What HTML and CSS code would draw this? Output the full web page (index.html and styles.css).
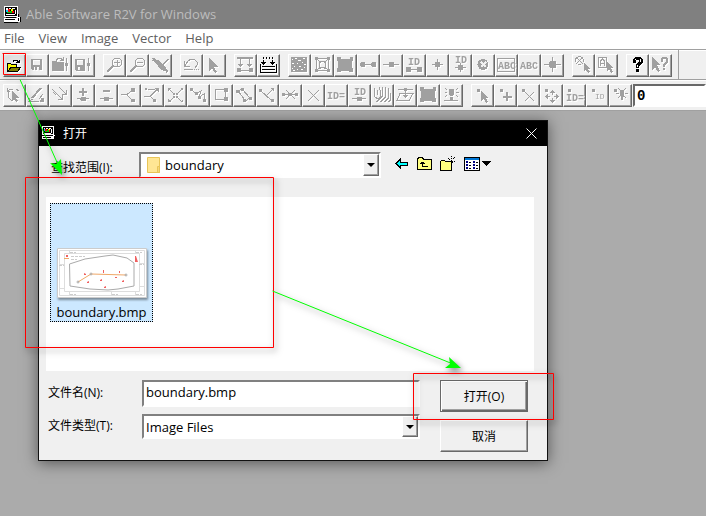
FILE: index.html
```
<!DOCTYPE html>
<html lang="zh-CN">
<head>
<meta charset="utf-8">
<title>Able Software R2V for Windows</title>
<link rel="stylesheet" href="styles.css">
</head>
<body>
<svg class="defs" aria-hidden="true">
  <symbol id="app" viewBox="0 0 18 18">
    <path fill="#fff" d="M0 0h14v11H0zM0 12h13v4H0z"/>
    <path fill="#000" d="M1 1h12v9H1zM2 11h10v1H2zM1 13h10v1H1zM0 16h14v1H0zM14 8h1v3h-1z"/>
    <path fill="#fff" d="M2 2h2v2H2zM5 2h2v1H5zM8 2h3v1H8zM11 4h1v4h-1zM2 8h9v1H2zM13 11h3v5h-3z"/>
    <path fill="#000" d="M14 12h1v3h-1zM16 11h1v5h-1z"/>
    <path fill="#ff0" d="M7 3h2v2H7z"/><path fill="#0cf" d="M2 4h2v2H2z"/><path fill="red" d="M4 3h2v3H4zM8 5h2v2H8z"/><path fill="#0c0" d="M3 6h3v1H3zM6 5h2v2H6z"/>
  </symbol>
</svg>
<div class="app">
  <header class="titlebar"><svg class="app-icon"><use href="#app"/></svg><h1>Able Software R2V for Windows</h1></header>
  <nav class="menu"><a href="#file">File</a><a href="#view">View</a><a href="#image">Image</a><a href="#vector">Vector</a><a href="#help">Help</a></nav>

  <div class="toolbar main-tools">
    <div class="group">
      <button class="tool live" aria-label="Open"><svg viewBox="0 0 21 21"><path fill="#ff0" d="M3 8h4v1h6v3h4l-3 5H3z"/><path fill="#808000" d="M7 12h10l-3 5H4z"/><path class="l" d="M3.500 17V8.500h3l1 1h5V12M7 12.500h9.500l-3 4H3.500l3.500-4M9 6.500l1-1h3l2 2M12 7.500h3.500V5"/></svg></button>
      <button class="tool" aria-label="Save"><svg viewBox="0 0 21 21"><path fill-rule="evenodd" d="M4 4h11v11H5l-1-1zM6 5v5h7V5zM7 12v3h1v-3zM10 12v3h2v-3z"/></svg></button>
      <button class="tool" aria-label="Open project"><svg viewBox="0 0 21 21"><path d="M2 6h4l1 1h7v9H2zM15 8h3v3h-3z"/><path class="l" d="M6 5.500l2-2h3l2 2M10 5.500h3.500V2M16.500 3v13"/></svg></button>
      <button class="tool" aria-label="Save project"><svg viewBox="0 0 21 21"><path fill-rule="evenodd" d="M2 4h10v12H3l-1-1zM4 5v5h6V5zM5 12v3h2v-3zM14 8h3v3h-3z"/><path class="l" d="M15.500 3v13"/></svg></button>
    </div>
    <div class="group">
      <button class="tool" aria-label="Zoom in"><svg viewBox="0 0 21 21"><circle class="l" cx="13" cy="7.500" r="4.500"/><path class="l" d="M10 7.500h6M13.500 5v6"/><path class="w" d="M9 11l-6 6"/></svg></button>
      <button class="tool" aria-label="Zoom out"><svg viewBox="0 0 21 21"><circle class="l" cx="13" cy="7.500" r="4.500"/><path class="l" d="M10 7.500h6"/><path class="w" d="M9 11l-6 6"/></svg></button>
      <button class="tool" aria-label="Pan view"><svg viewBox="0 0 21 21"><path d="M2 3h2l2 2h2l4 4 5-5h2l-5 6 2 3 2 3-1 2h-1v-2h-2l-3-1-3-4-4-4-1-1H2V5h1z"/></svg></button>
    </div>
    <div class="group">
      <button class="tool" aria-label="Undo"><svg viewBox="0 0 21 21"><path class="l" d="M3.500 6v5.500H9M4 11l3-5 3-2h3l3 3v3l-2 3M3 14.500h9M13 14.500h1M15 14.500h1M17 14.500h1"/></svg></button>
      <button class="tool" aria-label="Select"><svg viewBox="0 0 21 21"><path d="M5 3l9 9h-4l3 5-2 1-3-5-3 3z"/></svg></button>
    </div>
    <div class="group">
      <button class="tool" aria-label="Trace"><svg viewBox="0 0 21 21"><path d="M2 2h16v2H2zM2 13h4v4H2zM14 13h4v4h-4zM3 9h5l-2.500 3zM12 9h5l-2.500 3z"/><path class="l" d="M5.500 4v7M14.500 4v7M5 15.500h10"/></svg></button>
      <button class="tool live" aria-label="Vectorize"><svg viewBox="0 0 21 21"><path fill="#000" d="M3 7h5l-2.500 3zM12 7h5l-2.500 3z"/><path class="l" stroke-dasharray="2 1" d="M5.500 2v6M14.500 2v6M8.500 2v3M11.500 2v3"/><path class="l" d="M2.500 9v8.500h16V9M4 11.500h13M4 14.500h13"/></svg></button>
    </div>
    <div class="group">
      <button class="tool" aria-label="Raster"><svg viewBox="0 0 21 21"><path fill-rule="evenodd" d="M2 2h16v15H2zM3 4v1h1V4zM6 3v1h2V3zM9 5v1h3V5zM14 3v1h2V3zM13 7v1h1V7zM15 9v1h2V9zM8 8v1h1V8zM3 8v1h2V8zM5 11v1h1v-1zM10 11v1h2v-1zM15 12v1h1v-1zM12 14v1h2v-1zM8 14v1h1v-1zM3 13v1h1v-1zM4 15v1h2v-1z"/></svg></button>
      <button class="tool" aria-label="Outline"><svg viewBox="0 0 21 21"><path d="M3 2h3v3H3zM15 2h3v3h-3zM3 14h3v3H3zM15 14h3v3h-3zM7 6h2v2H7zM12 6h2v2h-2zM7 12h2v2H7zM12 12h2v2h-2z"/><path class="l" d="M4.500 3.500h12v12h-12zM7.500 6.500h6v6h-6zM5 4l3 3M16 4l-3 3M5 15l3-3M16 15l-3-3"/></svg></button>
      <button class="tool" aria-label="Polygon"><svg viewBox="0 0 21 21"><path d="M2 2h4v2h9V2h3v4h-1v7h1v4h-4v-1H6v1H2v-4h1V6H2z"/></svg></button>
      <button class="tool" aria-label="Line"><svg viewBox="0 0 21 21"><path d="M3 7h3l1 1v3l-1 1H3l-1-1V8zM14 7h3l1 1v3l-1 1h-3l-1-1V8z"/><path class="l" d="M6 9.500h8"/></svg></button>
      <button class="tool" aria-label="Node"><svg viewBox="0 0 21 21"><path d="M8 7h5v5H8z"/><path class="l" d="M2 9.500h16"/></svg></button>
      <button class="tool" aria-label="Line ID"><svg viewBox="0 0 21 21"><path d="M2 12h5v5H2zM13 12h5v5h-5z"/><path class="l" d="M5 14.500h10"/><text x="4" y="10">ID</text></svg></button>
      <button class="tool" aria-label="Point"><svg viewBox="0 0 21 21"><path d="M8 7h5v5H8z"/><path class="l" d="M5 9.500h11M10.500 4v11"/></svg></button>
      <button class="tool" aria-label="Point ID"><svg viewBox="0 0 21 21"><path d="M8 10h5v5H8z"/><path class="l" d="M5 12.500h11M10.500 8v9"/><text x="5" y="8">ID</text></svg></button>
      <button class="tool" aria-label="Control point"><svg viewBox="0 0 21 21"><circle cx="10" cy="9.500" r="5.500"/><path stroke="#f0f0f0" stroke-width="2" d="M8 7l5 5M13 7l-5 5"/></svg></button>
      <button class="tool" aria-label="Boxed text"><svg viewBox="0 0 21 21"><path class="l" d="M1.500 3.500h17v13h-17z"/><text class="abc" x="2" y="14">ABC</text></svg></button>
      <button class="tool" aria-label="Text"><svg viewBox="0 0 21 21"><text class="abc big" x="1" y="14">ABC</text></svg></button>
      <button class="tool" aria-label="Marker"><svg viewBox="0 0 21 21"><path d="M8 6h5l1 1v5l-1 1H8l-1-1V7z"/><path class="l" d="M2 9.500h17M10.500 2v15"/></svg></button>
    </div>
    <div class="group">
      <button class="tool" aria-label="Select point"><svg viewBox="0 0 21 21"><circle class="l" cx="6.500" cy="5.500" r="4"/><path class="l" d="M4 3l5 5M9 3L4 8"/><path d="M11 8l6 6h-2l2 3-2 1-2-3-2 1z"/></svg></button>
      <button class="tool" aria-label="Select text"><svg viewBox="0 0 21 21"><path class="l" d="M2.500 2.500h8v10h-8zM4.500 11V6l2-2 2 2v5M4 8.500h4"/><path d="M11 7l6 6h-2l2 4-2 1-2-4-2 2z"/></svg></button>
    </div>
    <div class="group">
      <button class="tool live" aria-label="Help"><svg viewBox="0 0 21 21"><path fill="#000" d="M8 2h5l3 2v4l-4 3v2H9v-4l3-2V5H9v3H6V4zM9 14h3v3H9z"/><path fill="#fff" d="M8 4h1v1H8zM13 4h1v3h-1zM10 10h1v2h-1z"/></svg></button>
      <button class="tool" aria-label="Context help"><svg viewBox="0 0 21 21"><path d="M2 2l8 8H7l3 6-2 1-3-5-3 3zM12 2h4l2 2v4l-3 2v2h-2V9l3-2V4h-3v3h-2V4zM13 13h2v2h-2z"/></svg></button>
    </div>
  </div>

  <div class="toolbar edit-tools">
    <div class="group">
      <button class="tool" aria-label="Edit"><svg viewBox="0 0 21 21"><path class="l" d="M5 4.500h4M5 5l-1 4 1 4 3 3M3 3v3h3M12 4l3 2"/><path d="M8 6l7 7h-3l2 3-2 1-2-3-2 2z"/></svg></button>
      <button class="tool" aria-label="Draw"><svg viewBox="0 0 21 21"><path class="w" d="M5 13L14 3"/><path class="l" d="M3 13l-1 3 4-2M2 16.500h10M12 14l4-5"/><path d="M14 13h3v4h-4z"/></svg></button>
      <button class="tool" aria-label="Split lines"><svg viewBox="0 0 21 21"><path class="l" d="M2 4l10 10M9 2l7 7M8 14.500h4.500V10M12 9.500h4.500V5M3 7l3 3"/></svg></button>
      <button class="tool" aria-label="Add node"><svg viewBox="0 0 21 21"><path d="M9 3h2v8H9zM6 6h8v2H6zM8 12h4l1 1v2l-1 1H8l-1-1v-2z"/><path class="l" d="M4 13.500h12"/></svg></button>
      <button class="tool" aria-label="Delete node"><svg viewBox="0 0 21 21"><path d="M7 5h7v2H7zM8 12h5v4H8z"/><path class="l" d="M4 13.500h13"/></svg></button>
      <button class="tool" aria-label="Join"><svg viewBox="0 0 21 21"><path d="M12 3h4v4h-4zM12 14h4v3h-4z"/><path class="l" d="M2 9.500h6l6-5M8 10l6 6"/></svg></button>
      <button class="tool" aria-label="Move end"><svg viewBox="0 0 21 21"><path d="M12 3h5v5zM11 14h3v3h-3zM3 3h2v2H3z"/><path class="l" d="M2 11.500h6l7-7M6 4.500h7M8 11l5 5"/></svg></button>
      <button class="tool" aria-label="Collapse"><svg viewBox="0 0 21 21"><path d="M8 8h2v2H8zM11 8h2v2h-2zM8 11h2v2H8zM11 11h2v2h-2zM3 3h3L3 6zM18 3h-3l3 3zM3 17h3l-3-3zM18 17h-3l3-3z"/><path class="l" d="M4 4l4 4M17 4l-4 4M4 17l4-4M17 17l-4-4"/></svg></button>
      <button class="tool" aria-label="Reshape"><svg viewBox="0 0 21 21"><path d="M2 3h3v3H2zM7 7h3v3H7zM10 11h3v3h-3zM15 14h3v3h-3z"/><path class="l" d="M3 4l5 5 5-3-2 6 5-3v6"/></svg></button>
      <button class="tool" aria-label="Close shape"><svg viewBox="0 0 21 21"><path d="M13 3h4v4h-4zM13 12h4v4h-4z"/><path class="l" d="M4.500 4.500h10v10h-10z"/></svg></button>
      <button class="tool" aria-label="Parallel"><svg viewBox="0 0 21 21"><path d="M2 5h4v3H2zM7 3h3v3H7zM9 14h3v3H9zM15 12h3v3h-3z"/><path class="l" d="M4 6l7 9M8 4l8 9-5 3M4 6l4-2"/></svg></button>
      <button class="tool" aria-label="Extend"><svg viewBox="0 0 21 21"><path d="M2 4h3v3H2zM13 3h4v4zM14 14h3v3h-3z"/><path class="l" d="M3 5l12 11M10 10l6-6"/></svg></button>
      <button class="tool" aria-label="Break"><svg viewBox="0 0 21 21"><path d="M2 8h3v3H2zM8 8h4v3H8zM15 8h3v3h-3z"/><path class="l" d="M2 9.500h16M6 5l9 9M15 5l-9 9"/></svg></button>
      <button class="tool" aria-label="Delete"><svg viewBox="0 0 21 21"><path class="l" d="M5 5l11 11M16 5L5 16"/></svg></button>
      <button class="tool" aria-label="Set line ID"><svg viewBox="0 0 21 21"><text x="1" y="14">ID=</text></svg></button>
      <button class="tool" aria-label="Show line ID"><svg viewBox="0 0 21 21"><path d="M8 12h5v4H8z"/><path class="l" d="M3 13.500h14"/><text x="5" y="10">ID</text></svg></button>
      <button class="tool" aria-label="Contours"><svg viewBox="0 0 21 21"><path class="l" d="M3 3l-1 4 1 5 3 2 2-2V5L7 2M5.500 5v5M10.500 2v9l-6 6M13.500 2v10l-5 5M16.500 3v10l-4 4M18.500 8v7l-2 2"/></svg></button>
      <button class="tool" aria-label="Layer"><svg viewBox="0 0 21 21"><path d="M9 3h3v3H9zM8 10h5l-2.500 3z"/><path class="l" d="M3 4.500h15M10.500 6v6M5 8.500h13l-4 7H2z"/></svg></button>
      <button class="tool" aria-label="Fill polygon"><svg viewBox="0 0 21 21"><path d="M2 2h4v2h9V2h3v4h-1v7h1v4h-4v-1H6v1H2v-4h1V6H2z"/></svg></button>
      <button class="tool" aria-label="Highlight line"><svg viewBox="0 0 21 21"><path d="M8 4h5v5l-1 2H9L8 9zM9 12h3v4H9z"/><path class="l" d="M4 3l2 2M17 3l-2 2M4 7.500h2M15 7.500h3M4 12l2-2M17 12l-2-2M3 15.500h14"/></svg></button>
    </div>
    <div class="group">
      <button class="tool" aria-label="Select node"><svg viewBox="0 0 21 21"><path d="M5 4h3v3H5zM9 6l7 7h-2l2 4-2 1-2-4-3 2z"/></svg></button>
      <button class="tool" aria-label="Add point"><svg viewBox="0 0 21 21"><path d="M5 4h3v3H5zM11 7h2v9h-2zM8 11h9v2H8z"/></svg></button>
      <button class="tool" aria-label="Delete point"><svg viewBox="0 0 21 21"><path d="M4 4h3v3H4z"/><path class="l" d="M7 7l9 9M16 7l-9 9"/></svg></button>
      <button class="tool" aria-label="Move point"><svg viewBox="0 0 21 21"><path d="M4 4h3v3H4zM11 5l3 3H8zM11 18l3-3H8zM4 11.500l3-3v6zM18 11.500l-3-3v6z"/><path class="l" d="M11.500 7v3M11.500 13v3M6 11.500h3M13 11.500h3"/></svg></button>
      <button class="tool" aria-label="Set point ID"><svg viewBox="0 0 21 21"><path d="M4 4h3v3H4z"/><text x="2" y="16">ID=</text></svg></button>
      <button class="tool" aria-label="Show point ID"><svg viewBox="0 0 21 21"><path d="M5 4h3v3H5z"/><text class="thin" x="8" y="14">ID</text></svg></button>
      <button class="tool" aria-label="Highlight point"><svg viewBox="0 0 21 21"><path d="M4 4h3v3H4zM10 5h4v6l-1 1v3h-2v-3l-1-1z"/><path class="l" d="M8 3l2 2M16 3l-2 2M6 8.500h3M15 8.500h3M8 13l2-2M16 13l-2-2"/></svg></button>
    </div>
    <input class="id-value" aria-label="ID value" value="0">
  </div>

  <main class="workspace"></main>

  <section class="dialog" role="dialog" aria-labelledby="dlg-title">
    <header class="dialog-title">
      <svg class="app-icon small"><use href="#app"/></svg><h2 id="dlg-title">打开</h2>
      <button class="close" aria-label="关闭"><svg viewBox="0 0 11 11"><path d="M.5.5l10 10M10.500.5l-10 10"/></svg></button>
    </header>
    <div class="lookin">
      <label for="look">查找范围(I):</label>
      <div class="combo with-icon">
        <svg class="folder" viewBox="0 0 14 17"><path fill="#ffe694" stroke="#e8c558" d="M.5.5h12v15H.5z"/><path fill="#f5d77a" stroke="#e8c558" d="M10.500 9.500h2v6h-2z"/></svg>
        <select id="look"><option>boundary</option></select><span class="drop"></span>
      </div>
      <div class="nav-tools">
        <button aria-label="返回"><svg width="14" height="12" viewBox="0 0 14 12"><path fill="#0ff" stroke="#000" d="M1 5.500l4-4v2.500h7.500v3H5v2.500z"/></svg></button>
        <button aria-label="向上一级"><svg width="16" height="14" viewBox="0 0 16 14"><path fill="#ffff80" stroke="#000" d="M.5 2.500l1-2h4l1 2h8v10H.5z"/><path stroke="#000" fill="none" d="M5.500 4.500v5H11M3 6.500h5M4 5.500h3"/></svg></button>
        <button aria-label="新建文件夹"><svg width="17" height="15" viewBox="0 0 17 15"><path fill="#ffff80" stroke="#000" d="M.5 14.500v-9l1-1h3l1 1h6v9z"/><path stroke="#000" fill="none" stroke-dasharray="1 1" d="M8 2l7 7M15 1L8 8M11.500 0v10M8 5.500h8"/></svg></button>
        <button aria-label="查看"><svg width="27" height="14" viewBox="0 0 27 14"><path fill="#fff" stroke="#000" d="M.5.5h15v13H.5z"/><path fill="#0078d7" d="M1 1h14v2H1z"/><path fill="#000080" d="M2 4h2v2H2zM2 7h2v2H2zM2 10h2v2H2zM9 4h2v2H9zM9 7h2v2H9zM9 10h2v2H9z"/><path stroke="#000" d="M5 5.500h2M5 8.500h2M5 11.500h2M12 5.500h2M12 8.500h2M12 11.500h2"/><path d="M18 4h9l-4.500 5z"/></svg></button>
      </div>
    </div>
    <div class="files">
      <button class="file">
        <svg class="thumb" viewBox="0 0 90 50">
          <path fill="#fff" stroke="#ccc" d="M.5.5h89v49H.5z"/>
          <path fill="none" stroke="#ddd" d="M2.500 2.500h85v45h-85zM7.500 5.500h75v38h-75zM12.500 2v4M78.500 2v4M12.500 43v5M54.500 43v5M78.500 43v5M2 16.500h5M2 40.500h5M82 15.500h5M82 38.500h5"/>
          <path fill="none" stroke="#aaa" d="M12.500 16L28 11l20-3 8-1 14 3 7 5v23l-16 3-10 1-18-1-20-3z"/>
          <path fill="none" stroke="#f0a868" d="M21 34l13-8 35 1M7 10.500h5"/>
          <g fill="#f06060"><path d="M9 7h2v2H9zM78 8h1l2 6h-3zM27 25l2 1v1h-2zM46 22h1v3h-1zM62 23h1v2h-1zM30 34l2-1v2h-2zM43 32l2-1v2h-2zM58 29h2v1h-2zM65 33l2-1v2h-2zM47 39l2-1v2h-2z"/></g>
          <path stroke="#ccc" stroke-dasharray="3 1" d="M14 8.500h14M14 11.500h6M13 4.500h6M79 4.500h6M13 46.500h6M55 46.500h6M79 46.500h6M2 17.500h5M82 16.500h5"/>
          <g fill="none" stroke="#aaa"><circle cx="21" cy="34" r="1"/><circle cx="34" cy="26" r="1"/><circle cx="69" cy="27" r="1"/></g>
        </svg>
        <span>boundary.bmp</span>
      </button>
    </div>
    <div class="form">
      <div class="fields">
        <label for="name">文件名(N):</label>
        <input id="name" class="name" value="boundary.bmp">
        <label for="type">文件类型(T):</label>
        <div class="combo"><select id="type"><option>Image Files</option></select><span class="drop"></span></div>
      </div>
      <div class="actions">
        <button class="push default">打开(O)</button>
        <button class="push">取消</button>
      </div>
    </div>
  </section>

  <svg class="notes" viewBox="0 0 706 516" aria-hidden="true">
    <g fill="none" stroke="#f00">
      <path d="M2.500 53.500h23v21h-22v-21M25.500 177.500h248v170h-248zM413.500 373.500h140v46h-140z"/>
    </g>
    <g fill="#0f0" stroke="#0f0">
      <path d="M20 79.500l38 85M272.500 291l178 72"/>
      <path stroke="none" d="M62 175l-12-12 6 1 5-5zM461 368l-16 0 5-4-1-7z"/>
    </g>
  </svg>
</div>
</body>
</html>
```
FILE: styles.css
```
* { box-sizing: border-box; }
body { margin: 0; font-family: "Open Sans", "Noto Sans CJK SC", sans-serif; font-size: 13px; color: #000; }
button, input, select { font: inherit; color: inherit; margin: 0; padding: 0; border: 0; border-radius: 0; background: none; }
h1, h2 { margin: 0; font-weight: 400; }
svg { display: block; }
.defs { display: none; }

.app { position: relative; display: flex; flex-direction: column; min-height: 100vh; overflow: hidden; background: #f0f0f0; }
.titlebar { display: flex; align-items: center; gap: 4px; height: 29px; padding: 0 4px; background: #808080; color: #bdbdbd; }
.titlebar h1 { font-size: 13px; line-height: 26px; padding-bottom: 2px; }
.app-icon { width: 18px; height: 18px; shape-rendering: crispEdges; }
.menu { display: flex; gap: 14px; height: 20px; padding: 0 4px; background: #fff; }
.menu a { color: #606060; line-height: 19px; text-decoration: none; }

.toolbar { display: flex; gap: 8px; height: 30px; padding: 3px 3px 0; border-top: 1px solid #a0a0a0; box-shadow: inset 0 1px #fff; }
.main-tools { padding-top: 4px; }
.edit-tools { height: 32px; padding-top: 4px; padding-right: 0; border-bottom: 1px solid #a0a0a0; }
.main-tools::after { content: ""; width: 1px; margin: -4px 0 0 -2px; background: #a0a0a0; }
.group { display: flex; flex: none; }
.tool { width: 23px; height: 23px; border: 1px solid; border-color: #fff #696969 #696969 #fff; box-shadow: inset -1px -1px #a0a0a0; }
.tool svg { width: 21px; height: 21px; fill: #a0a0a0; shape-rendering: crispEdges; filter: drop-shadow(1px 1px 0 #fff); }
.tool .l { fill: none; stroke: #a0a0a0; stroke-width: 1; }
.tool .w { fill: none; stroke: #a0a0a0; stroke-width: 2; }
.tool.live .l { stroke: #000; }
.tool text { font: bold 10px "Liberation Mono", monospace; }
.tool .thin { font-weight: 400; font-size: 8px; }
.id-value { flex: 1; min-width: 0; height: 23px; margin-left: -7px; padding-left: 2px; background: #fff; border: 2px solid; border-color: #696969 #fff #fff #696969; font: bold 14px "Liberation Mono", monospace; }
.workspace { flex: 1; background: #ababab; }

.dialog { position: absolute; left: 38px; top: 120px; width: 510px; border: 1px solid #111; background: #f0f0f0; box-shadow: 0 2px 14px rgba(0, 0, 0, .5); }
.dialog-title { display: flex; align-items: center; gap: 6px; height: 25px; padding: 0 10px 0 3px; background: #000; color: #fff; }
.dialog-title h2 { font-size: 12px; line-height: 24px; }
.app-icon.small { width: 15px; height: 15px; }
.close { margin-left: auto; }
.close svg { width: 11px; height: 11px; stroke: #fff; }
label { font-size: 12px; }
.lookin { display: flex; align-items: center; padding: 6px 12px 0; }
.lookin label { width: 88px; padding-top: 4px; }
.combo { position: relative; display: flex; align-items: center; height: 25px; padding: 0 2px; background: #fff; border: 2px solid; border-color: #808080 #fff #fff #808080; }
.with-icon { width: 242px; height: 26px; padding-left: 6px; }
.folder { width: 14px; height: 17px; }
.combo select { appearance: none; flex: 1; align-self: stretch; padding-right: 18px; outline: 0; }
.with-icon select { padding-left: 4px; }
.drop { position: absolute; top: 0; right: 0; bottom: 0; width: 16px; background: #f0f0f0; border: 1px solid; border-color: #fff #696969 #696969 #fff; box-shadow: inset -1px -1px #a0a0a0; pointer-events: none; }
.drop::after { content: ""; position: absolute; left: 3px; top: 8px; border: 4px solid transparent; border-top-color: #000; border-bottom: 0; }
.nav-tools { display: flex; align-items: center; gap: 8px; margin-left: 14px; padding-bottom: 3px; }
.nav-tools button + button + button { margin-left: -1px; }
.nav-tools svg { shape-rendering: crispEdges; }
.files { height: 174px; margin: 19px 13px 0 7px; padding: 6px 4px; background: #fff; }
.file { display: flex; flex-direction: column; align-items: center; justify-content: flex-end; width: 103px; height: 119px; background: #cce8ff; border: 1px dotted #000; }
.thumb { width: 90px; height: 50px; margin-bottom: 5px; filter: drop-shadow(1px 2px 1px rgba(0, 0, 0, .4)); }
.file span { line-height: 18px; }
.form { display: flex; gap: 20px; padding: 9px 19px 8px 9px; }
.fields { flex: 1; display: grid; grid-template-columns: 94px 1fr; row-gap: 7px; align-content: start; align-items: center; }
.fields label { line-height: 20px; padding-bottom: 2px; }
.name { height: 27px; padding: 0 2px 3px; background: #fff; border: 2px solid; border-color: #808080 #fff #fff #808080; }
.actions { flex: none; display: flex; flex-direction: column; gap: 8px; width: 88px; }
.push { height: 32px; font-size: 12px; border: 1px solid; border-color: #fff #696969 #696969 #fff; box-shadow: inset -1px -1px #a0a0a0; background: #f0f0f0; }
.push.default { border-color: #696969; box-shadow: inset 1px 1px #fff, inset -1px -1px #696969, inset -2px -2px #a0a0a0; }

.notes { position: absolute; left: 0; top: 0; width: 706px; height: 516px; pointer-events: none; filter: drop-shadow(2px 3px 3px rgba(0, 0, 0, .55)); }
```
